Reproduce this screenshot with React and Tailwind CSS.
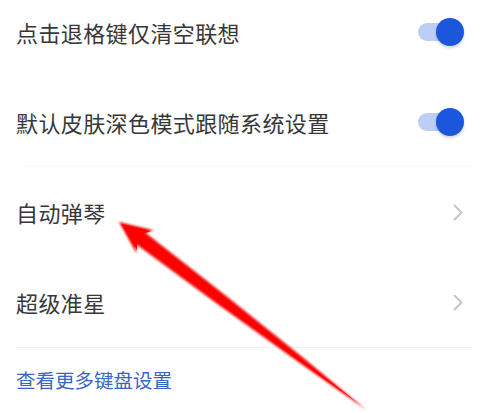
import React from "react";

const font = { fontFamily: '"Noto Sans CJK SC", "Noto Sans", sans-serif' };

function Toggle() {
  return (
    <div className="relative w-[46px] h-[28px] flex items-center">
      <div className="w-[37px] h-[18px] rounded-full bg-[#bccdf6]" />
      <div className="absolute right-0 top-0 w-[28px] h-[28px] rounded-full bg-[#1b56dd] shadow-[0_2px_3px_rgba(0,0,0,0.18)]" />
    </div>
  );
}

function Chevron() {
  return (
    <svg width="10" height="17" viewBox="0 0 10 17" className="mr-[1px]">
      <path d="M1.5 1.5 L8.5 8.5 L1.5 15.5" fill="none" stroke="#c4c4c4" strokeWidth="1.8" strokeLinecap="round" strokeLinejoin="round" />
    </svg>
  );
}

function Row({ label, right }) {
  return (
    <div className="h-[90px] flex items-center justify-between pl-[16px] pr-[36px]">
      <span className="text-[22px] leading-none text-[#373737] tracking-[0.4px]" style={font}>{label}</span>
      {right}
    </div>
  );
}

export default function App() {
  return (
    <div className="relative w-[500px] h-[413px] bg-white overflow-hidden">
      <div className="-mt-[13px] flex flex-col">
        <Row label="点击退格键仅清空联想" right={<Toggle />} />
        <Row label="默认皮肤深色模式跟随系统设置" right={<Toggle />} />
        <div className="ml-[24px] mr-[28px] h-px bg-[#f7f7f7] -mt-px" />
        <Row label="自动弹琴" right={<div className="w-[46px] flex justify-end"><Chevron /></div>} />
        <Row label="超级准星" right={<div className="w-[46px] flex justify-end"><Chevron /></div>} />
        <div className="ml-[16px] mr-[28px] h-px bg-[#f2f2f2]" />
        <div className="h-[64px] flex items-center pl-[16px]">
          <span className="text-[19.5px] leading-none text-[#3a64c6]" style={font}>查看更多键盘设置</span>
        </div>
      </div>
      <svg className="absolute inset-0 pointer-events-none" width="500" height="413" viewBox="0 0 500 413">
        <defs>
          <filter id="blur" x="-10%" y="-10%" width="120%" height="120%">
            <feGaussianBlur stdDeviation="0.9" />
          </filter>
        </defs>
        <polygon
          points="119,222 154,230.3 145,232.3 223.8,293.9 301.8,356.5 367,410.5 298,361.7 216.6,303.5 136,244.3 136.5,253.5"
          fill="#f20a0a"
          filter="url(#blur)"
        />
        <polygon
          points="121.5,224 151,231 143,234 223,296 300,358 362,406 298,360 217,301 137,242 137,250"
          fill="#ff0000"
        />
      </svg>
    </div>
  );
}
